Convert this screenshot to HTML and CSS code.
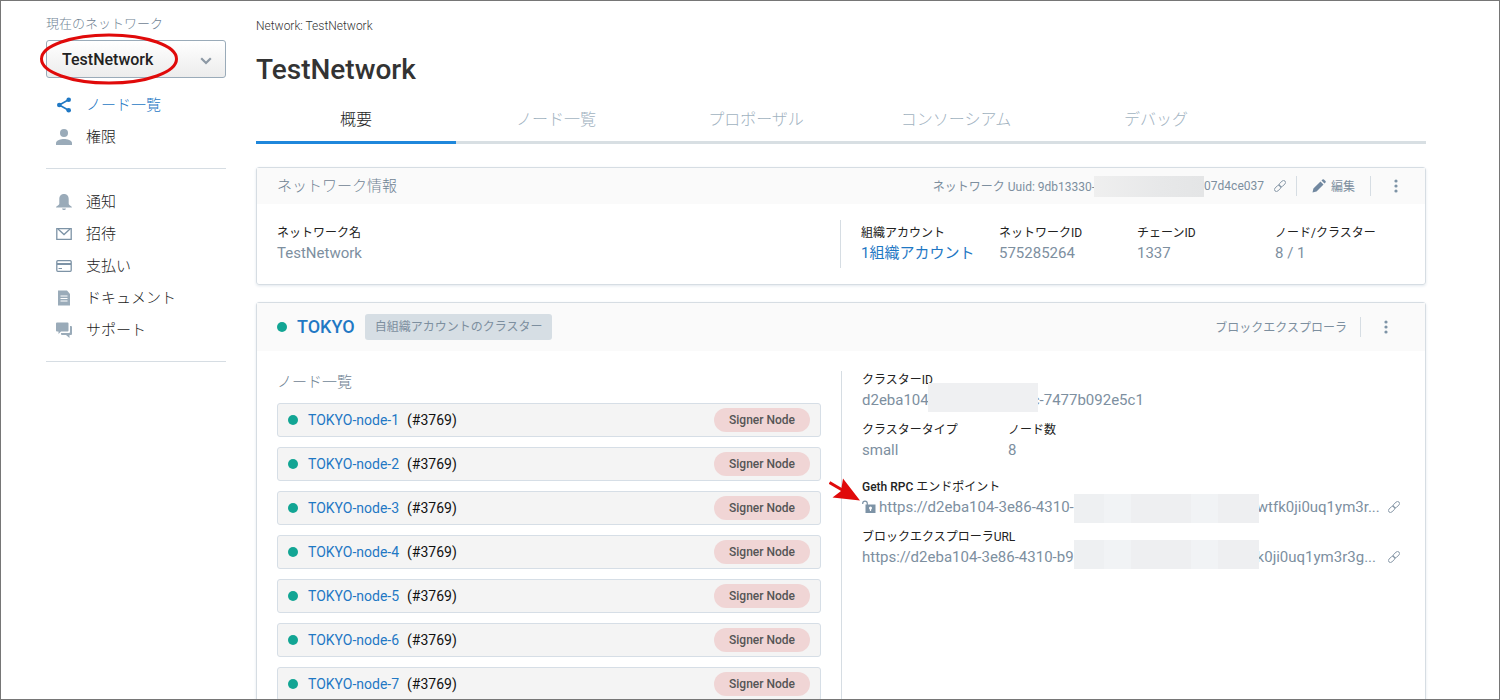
FILE: index.html
```
<!DOCTYPE html>
<html lang="ja">
<head>
<meta charset="utf-8">
<title>TestNetwork</title>
<link rel="stylesheet" href="styles.css">
</head>
<body>
<svg class="defs" aria-hidden="true">
  <symbol id="link" viewBox="0 0 12 12"><g transform="rotate(-45 6 6)" fill="none" stroke="currentColor" stroke-width="0.9"><rect x="-1" y="4" width="7.500" height="4" rx="2"/><rect x="5.500" y="4" width="7.500" height="4" rx="2"/></g></symbol>
  <symbol id="dots" viewBox="0 0 4 14"><circle cx="2" cy="2" r="1.600"/><circle cx="2" cy="7" r="1.600"/><circle cx="2" cy="12" r="1.600"/></symbol>
</svg>
<div class="page">
  <aside class="sidebar">
    <label class="side-label" for="network">現在のネットワーク</label>
    <div class="switcher">
      <select id="network" class="switcher-select"><option>TestNetwork</option></select>
      <svg class="switcher-arrow" viewBox="0 0 12 8"><path d="M1.200 1.200 6 6l4.800-4.800" fill="none" stroke="#8d99a5" stroke-width="2.200"/></svg>
      <svg class="mark-ring" viewBox="0 0 140 54"><ellipse cx="70" cy="27" rx="67.500" ry="24" fill="none" stroke="#e00a0a" stroke-width="3"/></svg>
    </div>
    <nav class="nav">
      <a class="nav-item nav-active" href="#nodes"><svg class="nav-icon" viewBox="0 0 16 16" fill="currentColor"><path d="M13 2.500 3.300 8 13 13.500" fill="none" stroke="currentColor" stroke-width="1.600"/><circle cx="12.700" cy="2.700" r="2.300"/><circle cx="3.300" cy="8" r="2.300"/><circle cx="12.700" cy="13.300" r="2.300"/></svg>ノード一覧</a>
      <a class="nav-item" href="#roles"><svg class="nav-icon" viewBox="0 0 16 16" fill="currentColor"><circle cx="8" cy="4" r="4"/><path d="M0 16v-2c0-2.600 5-4 8-4s8 1.400 8 4v2z"/></svg>権限</a>
    </nav>
    <nav class="nav">
      <a class="nav-item" href="#notices"><svg class="nav-icon" viewBox="0 0 16 16" fill="currentColor"><path d="M8 0C4.800 0 3.300 2.200 3.300 5v4.500C3.300 11.500 0 12 0 13.500h16c0-1.500-3.300-2-3.300-4V5C12.700 2.200 11.200 0 8 0zM6 14.500h4c-.3 1-1 1.500-2 1.500s-1.700-.5-2-1.500z"/></svg>通知</a>
      <a class="nav-item" href="#invites"><svg class="nav-icon" viewBox="0 0 16 16" fill="none" stroke="#7d93a6" stroke-width="1.300"><path d="M.8 2.700h14.400v10.600H.8z"/><path d="m2 3 6 5.500L14 3"/></svg>招待</a>
      <a class="nav-item" href="#billing"><svg class="nav-icon" viewBox="0 0 16 16" fill="none" stroke="#7d93a6" stroke-width="1.300"><rect x=".8" y="2.700" width="14.400" height="10.600" rx="1"/><path d="M1 6h14" stroke-width="2"/><path d="M2.500 10.500H6" stroke-width="1"/></svg>支払い</a>
      <a class="nav-item" href="#docs"><svg class="nav-icon" viewBox="0 0 16 16"><path fill="currentColor" d="M2 .5h9L14 4v11.500H2z"/><path d="M4.500 6h7M4.500 8.500h7M4.500 11h7" stroke="#fff"/></svg>ドキュメント</a>
      <a class="nav-item" href="#support"><svg class="nav-icon" viewBox="0 0 16 16" fill="currentColor"><path d="M1 .5h10.500q1 0 1 1v7q0 1-1 1H5L2.500 12V9.500H1q-1 0-1-1v-7q0-1 1-1z"/><path d="M14 4h1q1 0 1 1v7q0 1-1 1h-1.500v3L10 13H6q-1 0-1-1v-1h8q1 0 1-1z"/></svg>サポート</a>
    </nav>
  </aside>
  <main class="main">
    <p class="crumb">Network: TestNetwork</p>
    <h1 class="title">TestNetwork</h1>
    <div class="tabs">
      <button class="tab tab-active" type="button">概要</button>
      <button class="tab" type="button">ノード一覧</button>
      <button class="tab" type="button">プロポーザル</button>
      <button class="tab" type="button">コンソーシアム</button>
      <button class="tab" type="button">デバッグ</button>
    </div>
    <section class="card">
      <header class="card-head">
        <h2 class="card-title">ネットワーク情報</h2>
        <div class="tools">
          <span class="uuid"><span class="lift">ネットワーク Uuid: 9db13330-</span><span class="mask mask-head"></span>07d4ce037</span>
          <button class="icon-btn copy" type="button" aria-label="コピー"><svg class="link-icon"><use href="#link"/></svg></button>
          <button class="tool edit" type="button"><svg class="pencil" viewBox="0 0 14 14" fill="currentColor"><path d="M.5 13.500 1.400 9.500 8.500 2.500l3 3-7 7zM9.500 1.500l1-1q.7-.6 1.400 0l1.600 1.600q.6.700 0 1.400l-1 1z"/></svg><span class="lift">編集</span></button>
          <button class="tool menu" type="button" aria-label="メニュー"><svg class="dots"><use href="#dots"/></svg></button>
        </div>
      </header>
      <div class="info">
        <dl class="field info-name"><dt>ネットワーク名</dt><dd>TestNetwork</dd></dl>
        <div class="stats">
          <dl class="field"><dt>組織アカウント</dt><dd><a class="link" href="#accounts">1組織アカウント</a></dd></dl>
          <dl class="field"><dt>ネットワークID</dt><dd>575285264</dd></dl>
          <dl class="field"><dt>チェーンID</dt><dd>1337</dd></dl>
          <dl class="field"><dt>ノード/クラスター</dt><dd>8 / 1</dd></dl>
        </div>
      </div>
    </section>
    <section class="card cluster">
      <header class="card-head cluster-head">
        <span class="dot"></span>
        <h2 class="cluster-name"><a class="link" href="#tokyo">TOKYO</a></h2>
        <span class="tag">自組織アカウントのクラスター</span>
        <div class="tools">
          <a class="explorer lift" href="#explorer">ブロックエクスプローラ</a>
          <button class="tool menu menu-wide" type="button" aria-label="メニュー"><svg class="dots"><use href="#dots"/></svg></button>
        </div>
      </header>
      <div class="cluster-body">
        <div class="nodes">
          <h3 class="nodes-title">ノード一覧</h3>
          <ul class="node-list">
            <li class="node"><span class="dot"></span><a class="link" href="#n1">TOKYO-node-1</a><span>(#3769)</span><span class="pill">Signer Node</span></li>
            <li class="node"><span class="dot"></span><a class="link" href="#n2">TOKYO-node-2</a><span>(#3769)</span><span class="pill">Signer Node</span></li>
            <li class="node"><span class="dot"></span><a class="link" href="#n3">TOKYO-node-3</a><span>(#3769)</span><span class="pill">Signer Node</span></li>
            <li class="node"><span class="dot"></span><a class="link" href="#n4">TOKYO-node-4</a><span>(#3769)</span><span class="pill">Signer Node</span></li>
            <li class="node"><span class="dot"></span><a class="link" href="#n5">TOKYO-node-5</a><span>(#3769)</span><span class="pill">Signer Node</span></li>
            <li class="node"><span class="dot"></span><a class="link" href="#n6">TOKYO-node-6</a><span>(#3769)</span><span class="pill">Signer Node</span></li>
            <li class="node"><span class="dot"></span><a class="link" href="#n7">TOKYO-node-7</a><span>(#3769)</span><span class="pill">Signer Node</span></li>
          </ul>
        </div>
        <div class="details">
          <dl class="detail"><dt>クラスターID</dt><dd class="line">d2eba104<span class="mask mask-id"></span>c-7477b092e5c1</dd></dl>
          <div class="pair">
            <dl class="detail"><dt>クラスタータイプ</dt><dd>small</dd></dl>
            <dl class="detail"><dt>ノード数</dt><dd>8</dd></dl>
          </div>
          <dl class="detail endpoint">
            <dt><span class="latin">Geth RPC</span> エンドポイント</dt>
            <dd class="line"><svg class="lock" viewBox="0 0 14 14"><path d="M.7 4V3.500a2.300 2.300 0 0 1 4.600 0V6" fill="none" stroke="#7d93a6" stroke-width="1.200"/><path fill="#7d93a6" d="M3.500 4.500h10V13h-10z"/><circle cx="8.500" cy="8" r="1.500" fill="#fff"/><path d="M8.500 8v3" stroke="#fff" stroke-width="1.200"/></svg>https://d2eba104-3e86-4310-<span class="mask mask-url mask-low"></span>wtfk0ji0uq1ym3r...<button class="icon-btn url-copy" type="button" aria-label="コピー"><svg class="link-icon"><use href="#link"/></svg></button></dd>
            <svg class="mark-arrow" viewBox="0 0 32 24" fill="#e00a0a"><path d="M.5 4.500 15 13" stroke="#e00a0a" stroke-width="3"/><path d="M14 .5 31 22.500 3.500 19.500 12 13z"/></svg>
          </dl>
          <dl class="detail">
            <dt>ブロックエクスプローラURL</dt>
            <dd class="line">https://d2eba104-3e86-4310-b9<span class="mask mask-url"></span>k0ji0uq1ym3r3g...<button class="icon-btn url-copy" type="button" aria-label="コピー"><svg class="link-icon"><use href="#link"/></svg></button></dd>
          </dl>
        </div>
      </div>
    </section>
  </main>
</div>
</body>
</html>
```

FILE: styles.css
```
* { box-sizing: border-box; }
body, h1, h2, h3, p, dl, dd, ul { margin: 0; padding: 0; }
body {
  font-family: Roboto, "Noto Sans CJK JP", sans-serif;
  font-size: 15px;
  color: #333;
  background: #fff;
}
a { text-decoration: none; color: inherit; }
button { font: inherit; color: inherit; background: none; border: 0; padding: 0; }
svg { flex: none; }
.defs { position: absolute; width: 0; height: 0; }
.link { color: #1f78c4; }
.latin { font-weight: 500; }
.lift { padding-bottom: 2px; }

.page {
  display: flex;
  gap: 30px;
  height: 100vh;
  overflow: hidden;
  border: 1px solid #767676;
  padding: 0 73px 0 45px;
}

.sidebar { flex: none; width: 180px; padding-top: 13px; }
.side-label { display: block; font-size: 13px; line-height: 20px; font-weight: 300; color: #6f8394; margin-bottom: 6px; }
.switcher { position: relative; margin-bottom: 10px; }
.switcher-select {
  appearance: none;
  display: block;
  width: 100%;
  height: 38px;
  padding: 0 40px 0 15px;
  border: 1px solid #9aabb9;
  border-radius: 3px;
  background: linear-gradient(#fff, #ececec);
  font: 500 16px Roboto, sans-serif;
  color: #222;
}
.switcher-arrow { position: absolute; right: 14px; top: 17px; width: 12px; height: 8px; }
.mark-ring { position: absolute; left: -7px; top: -8px; width: 140px; height: 54px; }
.nav { border-bottom: 1px solid #d6dde3; padding-bottom: 16px; margin-bottom: 16px; }
.nav-item { display: flex; align-items: center; gap: 14px; height: 32px; padding: 0 0 2px 10px; font-weight: 300; color: #222; }
.nav-icon { width: 16px; height: 16px; margin-top: 4px; color: #9aabb9; }
.nav-active, .nav-active .nav-icon { color: #1f78c4; }

.main { flex: 1; min-width: 0; padding-top: 15px; }
.crumb { font-size: 12px; line-height: 20px; font-weight: 300; margin-bottom: 14px; }
.title { font-size: 28px; line-height: 40px; font-weight: 500; margin-bottom: 6px; }
.tabs { display: flex; border-bottom: 3px solid #d8dfe3; margin-bottom: 23px; }
.tab { width: 200px; height: 48px; margin-bottom: -3px; padding-bottom: 1px; border-bottom: 3px solid transparent; font-size: 16px; font-weight: 300; color: #a1b2bf; }
.tab-active { color: #222; border-color: #1f87db; }

.card { border: 1px solid #d6dde3; border-radius: 3px; box-shadow: 0 1px 3px #e2e8ee; margin-bottom: 17px; }
.card-head { display: flex; align-items: center; min-height: 36px; padding: 0 20px; background: #fafafa; color: #7d8f9f; font-size: 12px; }
.card-title { font-size: 15px; font-weight: 300; padding-bottom: 4px; color: #6f8394; }
.tools { display: flex; align-items: center; margin-left: auto; }
.uuid { display: flex; align-items: center; }
.mask { position: relative; flex: none; background: linear-gradient(90deg, #eef0f2 0 16%, #f1f3f5 16% 31%, #eeeff1 31% 63%, #f1f3f5 63% 78%, #eeeff1 78%); }
.mask-head { width: 110px; height: 21px; margin-left: -1px; background: linear-gradient(90deg, #efefef, #e7e8e9 60%, #e4e5e6); }
.icon-btn { display: flex; }
.link-icon { width: 12px; height: 12px; color: #7d8f9f; overflow: visible; }
.copy { margin: 0 10px; }
.tool { display: flex; align-items: center; height: 20px; border-left: 1px solid #d6dde3; }
.edit { gap: 5px; padding: 0 15px; }
.pencil { width: 14px; height: 14px; color: #7188a0; }
.menu { padding: 0 7px 0 23px; }
.menu-wide { padding-right: 17px; }
.dots { width: 4px; height: 14px; fill: #7d93a6; }

.info { display: flex; padding: 16px 20px; }
.info-name { flex: 1; }
.stats { display: grid; grid-template-columns: repeat(4, 138px); border-left: 1px solid #d6dde3; padding: 0 0 6px 20px; margin-right: -8px; }
dt { font-size: 12px; color: #222; }
dd { font-size: 15px; color: #7d8f9f; }
.field dt { padding-top: 2px; line-height: 22px; }
.field dd { line-height: 18px; white-space: nowrap; }

.cluster-head { min-height: 48px; }
.dot { flex: none; width: 10px; height: 10px; border-radius: 50%; background: #12a594; }
.cluster-name { font-size: 18px; font-weight: 500; margin: 0 10px; padding-bottom: 2px; }
.tag { padding: 0 10px; border-radius: 3px; background: #d6dee4; line-height: 26px; }
.explorer { padding-right: 13px; }
.cluster-body { display: grid; grid-template-columns: 544px 1fr; gap: 20px; padding: 20px 25px 20px 20px; }
.nodes-title { font-size: 15px; line-height: 22px; font-weight: 300; color: #6f8394; margin-bottom: 10px; }
.node-list { display: flex; flex-direction: column; gap: 10px; list-style: none; }
.node { display: flex; align-items: center; height: 34px; padding: 0 10px; border: 1px solid #d6dee6; border-radius: 3px; background: #f4f4f4; font-size: 14px; color: #111; }
.node .link { margin: 0 8px 0 10px; }
.pill { margin-left: auto; padding: 0 15px; border-radius: 12px; background: #f0d5d5; font-size: 12px; font-weight: 500; line-height: 24px; color: #555; }

.details { border-left: 1px solid #d6dde3; padding-left: 20px; min-width: 0; }
.detail { margin-bottom: 8px; }
.detail dt { padding-top: 2px; line-height: 14px; }
.detail dd { line-height: 26px; }
.line { display: flex; align-items: center; height: 26px; white-space: nowrap; }
.mask-id { width: 110px; height: 29px; margin: -9px -6px -4px -1px; background: #eff0f2; }
.mask-url { width: 185px; height: 29px; margin: -9px -2px -4px 0; }
.mask-low { margin: -6px -2px -9px 0; }
.pair { display: grid; grid-template-columns: 146px 1fr; }
.endpoint { position: relative; margin-top: 7px; }
.lock { width: 14px; height: 14px; margin-right: 3px; }
.url-copy { margin-left: auto; }
.mark-arrow { position: absolute; left: -33px; top: 0; width: 32px; height: 24px; }
```
